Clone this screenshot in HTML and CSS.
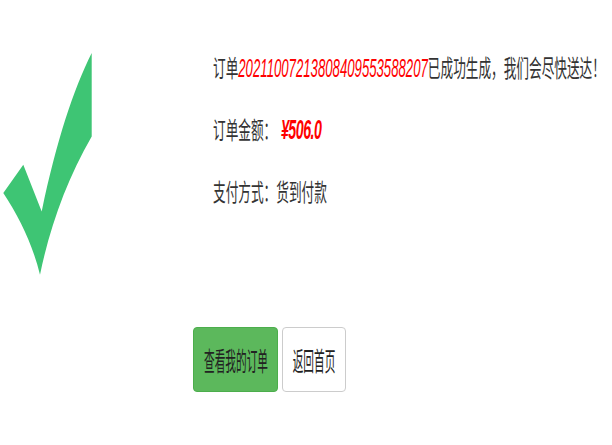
FILE: index.html
```html
<!DOCTYPE html>
<html lang="zh-CN">
<head>
  <meta charset="UTF-8">
  <meta name="viewport" content="width=device-width, initial-scale=1.0">
  <title>订单提交成功</title>
  <link rel="stylesheet" href="styles.css">
</head>
<body>
  <div class="page">
    <div class="icon-col">
      <svg class="check" viewBox="0 0 100 290" width="100" height="290">
        <path d="M91.7 0 L91.7 83.4 C66.7 126.7 50 173.4 40 221.7 C33 193 20 165 3.3 140 L23.3 111.7 L41.7 158.4 C56.7 87 73.3 37 91.7 0 Z" fill="#3ec574"/>
      </svg>
    </div>
    <div class="content">
      <div class="info">
        <p class="line">订单<span class="order-no">20211007213808409553588207</span>已成功生成，我们会尽快送达！</p>
        <p class="line">订单金额：<span class="amount">¥506.0</span></p>
        <p class="line">支付方式：货到付款</p>
      </div>
      <div class="buttons">
        <button class="btn btn-success"><span>查看我的订单</span></button>
        <button class="btn btn-default"><span>返回首页</span></button>
      </div>
    </div>
  </div>
</body>
</html>
```

FILE: styles.css
```css
body {
  margin: 0;
  padding: 0;
  font-family: "Noto Sans CJK SC", "Liberation Sans", sans-serif;
  color: #333;
  background: #fff;
  overflow: hidden;
}

.page {
  display: flex;
}

.icon-col {
  width: 193px;
  flex-shrink: 0;
  padding-top: 53px;
}

.check {
  display: block;
}

.content {
  padding-top: 36px;
}

.info {
  padding-left: 20px;
  width: 380px;
}

.line {
  margin: 0;
  height: 62px;
  line-height: 62px;
  font-size: 24px;
  white-space: nowrap;
  transform: scaleX(0.527);
  transform-origin: left center;
}

.order-no {
  font-family: "Liberation Sans", sans-serif;
  font-style: italic;
  font-size: 25px;
  color: #f00;
}

.amount {
  font-family: "Liberation Sans", sans-serif;
  font-style: italic;
  font-weight: bold;
  font-size: 27px;
  letter-spacing: -1px;
  color: #f00;
  margin-left: 9px;
}

.buttons {
  display: flex;
  gap: 4px;
  margin-top: 105px;
}

.btn {
  height: 65px;
  padding: 0;
  border-radius: 4px;
  border: 1px solid #ccc;
  font-family: "Noto Sans CJK SC", sans-serif;
  font-size: 26px;
  color: #222;
  display: flex;
  align-items: center;
  justify-content: center;
  white-space: nowrap;
  overflow: hidden;
  cursor: pointer;
}

.btn span {
  display: inline-block;
  transform: scaleX(0.41);
}

.btn-success {
  width: 85px;
  background: #5cb85c;
  border-color: #4cae4c;
}

.btn-default {
  width: 64px;
  background: #fff;
}
```
